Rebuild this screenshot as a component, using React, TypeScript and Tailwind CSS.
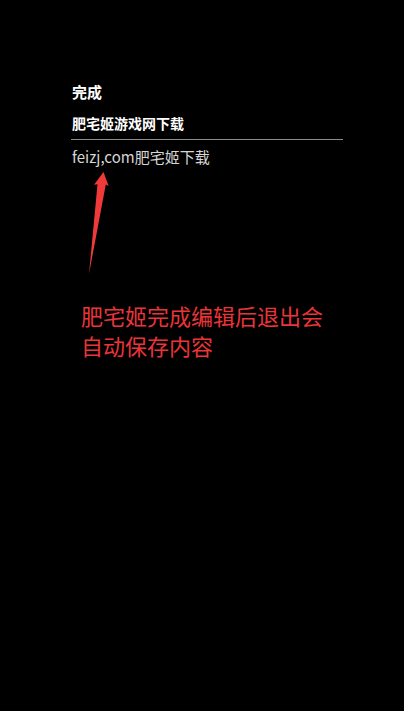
export default function App() {
  return (
    <div
      className="min-h-[711px] w-full bg-black pl-[72px] pt-[84px]"
      style={{ fontFamily: '"Noto Sans CJK SC", "Noto Sans", sans-serif' }}
    >
      <div className="text-[15px] leading-[15px] font-bold text-white">完成</div>
      <div className="mt-[17px] text-[14px] leading-[14px] font-bold text-white">
        肥宅姬游戏网下载
      </div>
      <div className="mt-[9px] -ml-px h-px w-[272px] bg-[#8c8c8c]" />
      <div className="mt-[9px] text-[15px] leading-[15px] text-[#d6d6d6]">
        feizj,com肥宅姬下载
      </div>

      {/* annotation arrow */}
      <svg
        className="mt-[6px] ml-[13px] block"
        width="26"
        height="106"
        viewBox="0 0 26 106"
        aria-hidden="true"
      >
        <polygon
          points="18.5,2 23.7,16 20.8,14.5 4,104 12.5,14.3 9,14.8"
          fill="#f03a3a"
        />
      </svg>

      <div className="mt-[24px] ml-[9px] text-[22px] leading-[30px] text-[#ea3439]">
        <div>肥宅姬完成编辑后退出会</div>
        <div>自动保存内容</div>
      </div>
    </div>
  );
}
